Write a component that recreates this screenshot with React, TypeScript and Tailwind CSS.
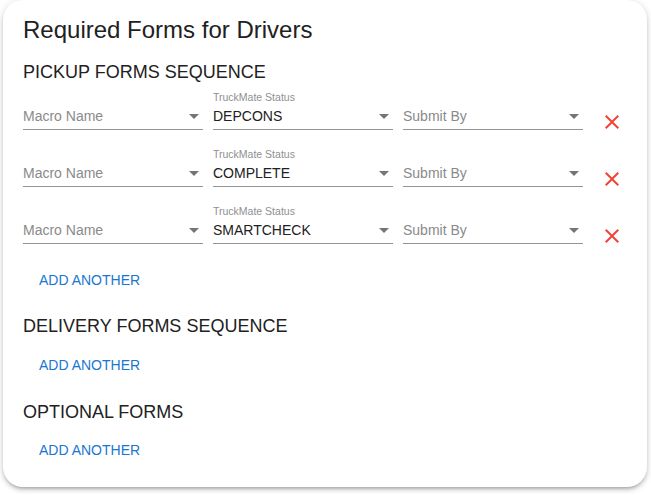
import React from "react";

function Arrow() {
  return (
    <svg width="10" height="5" viewBox="0 0 10 5" className="shrink-0">
      <path d="M0 0 L5 5 L10 0 Z" fill="#757575" />
    </svg>
  );
}

function Field({ label, value, placeholder }: { label?: string; value?: string; placeholder?: string }) {
  return (
    <div className="flex w-[180px] flex-col border-b border-[#949494]">
      <div className="h-[14px] text-[10.5px] leading-[14px] text-[#8f8f8f]">{label ?? ""}</div>
      <div className="flex items-center justify-between pt-[3px] pb-[3px] pr-[4px]">
        <span className={"text-[14px] leading-[19px] " + (value ? "text-[#212121]" : "text-[#8a8a8a]")}>
          {value ?? placeholder}
        </span>
        <Arrow />
      </div>
    </div>
  );
}

function CloseIcon() {
  return (
    <svg width="24" height="24" viewBox="0 0 24 24" className="mt-[20px] ml-[17px] shrink-0">
      <path
        d="M19 6.41L17.59 5 12 10.59 6.41 5 5 6.41 10.59 12 5 17.59 6.41 19 12 13.41 17.59 19 19 17.59 13.41 12z"
        fill="#f44336"
      />
    </svg>
  );
}

function Row({ status }: { status: string }) {
  return (
    <div className="flex h-[40px] items-start">
      <div className="flex gap-[10px]">
        <Field placeholder="Macro Name" />
        <Field label="TruckMate Status" value={status} />
        <Field placeholder="Submit By" />
      </div>
      <CloseIcon />
    </div>
  );
}

function AddButton({ className }: { className: string }) {
  return (
    <div className={"flex " + className}>
      <button className="ml-[8px] px-2 py-[6px] text-[14px] leading-[20px] text-[#1976d2] uppercase">
        Add Another
      </button>
    </div>
  );
}

export default function App() {
  return (
    <div className="bg-white pl-[3px] pr-[4px] pb-[8px]" style={{ fontFamily: '"Liberation Sans", Arial, sans-serif' }}>
      <div className="rounded-[20px] bg-white px-[20px] pt-[14px] pb-[21px] shadow-[0_3px_3px_-2px_rgba(0,0,0,0.2),0_3px_4px_0_rgba(0,0,0,0.14),0_1px_8px_0_rgba(0,0,0,0.12)]">
        <h1 className="text-[24px] leading-[32px] text-[#212121]">Required Forms for Drivers</h1>
        <h2 className="mt-[14px] text-[18px] leading-[24px] text-[#212121]">PICKUP FORMS SEQUENCE</h2>
        <div className="mt-[6px] flex flex-col gap-[17px]">
          <Row status="DEPCONS" />
          <Row status="COMPLETE" />
          <Row status="SMARTCHECK" />
        </div>
        <AddButton className="mt-[20px]" />
        <h2 className="mt-[18px] text-[18px] leading-[24px] text-[#212121]">DELIVERY FORMS SEQUENCE</h2>
        <AddButton className="mt-[11px]" />
        <h2 className="mt-[19px] text-[18px] leading-[24px] text-[#212121]">OPTIONAL FORMS</h2>
        <AddButton className="mt-[10px]" />
      </div>
    </div>
  );
}
